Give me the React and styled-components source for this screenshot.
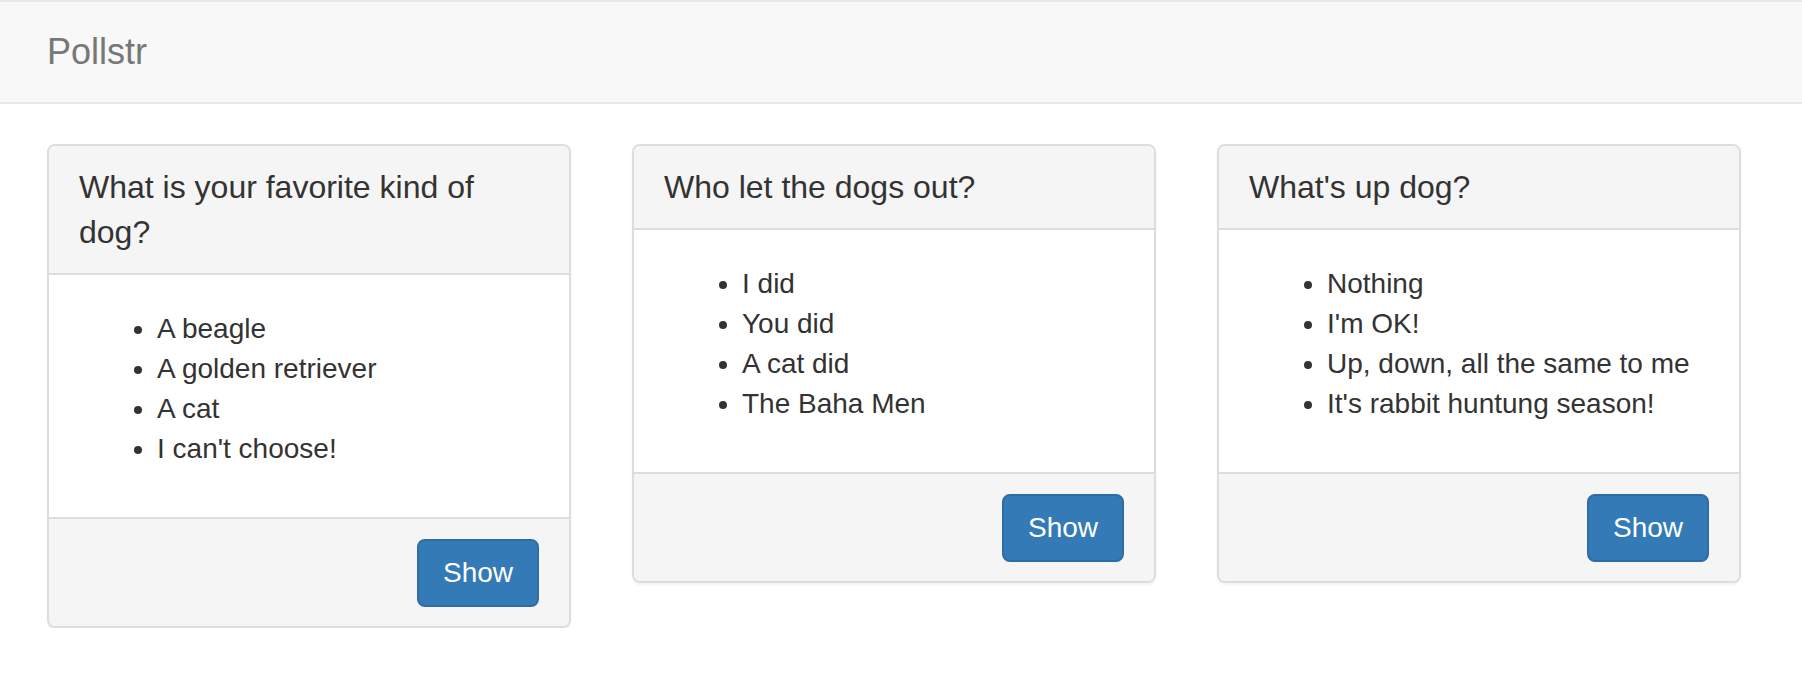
import React from "react";
import styled, { createGlobalStyle } from "styled-components";

const GlobalStyle = createGlobalStyle`
  html, body {
    margin: 0;
    padding: 0;
    background: #ffffff;
  }
  body {
    font-family: "Liberation Sans", Helvetica, Arial, sans-serif;
    color: #333333;
  }
  * { box-sizing: border-box; }
`;

const Navbar = styled.header`
  width: 100%;
  height: 104px;
  background: #f8f8f8;
  border-top: 2px solid #e7e7e7;
  border-bottom: 2px solid #e7e7e7;
  display: flex;
  align-items: center;
  padding-left: 47px;
`;

const Brand = styled.a`
  font-size: 36px;
  line-height: 40px;
  color: #777777;
  text-decoration: none;
`;

const Main = styled.main`
  display: flex;
  align-items: flex-start;
  gap: 61px;
  padding: 40px 0 0 47px;
`;

const Panel = styled.section`
  width: 524px;
  background: #ffffff;
  border: 2px solid #dddddd;
  border-radius: 8px;
  box-shadow: 0 2px 2px rgba(0, 0, 0, 0.05);
  overflow: hidden;
`;

const PanelHeading = styled.div`
  background: #f5f5f5;
  border-bottom: 2px solid #dddddd;
  padding: 19px 30px 18px;
`;

const PanelTitle = styled.h3`
  margin: 0;
  font-size: 32px;
  line-height: 45px;
  font-weight: 400;
  color: #333333;
`;

const PanelBody = styled.div`
  padding: 34px 30px 48px;
`;

const OptionList = styled.ul`
  margin: 0;
  padding-left: 78px;
  list-style: disc;
`;

const OptionItem = styled.li`
  font-size: 28px;
  line-height: 40px;
  color: #333333;
`;

const PanelFooter = styled.div`
  background: #f5f5f5;
  border-top: 2px solid #dddddd;
  padding: 20px 30px 19px;
  display: flex;
  justify-content: flex-end;
`;

const Button = styled.button`
  font-family: "Liberation Sans", Helvetica, Arial, sans-serif;
  font-size: 28px;
  line-height: 40px;
  font-weight: 400;
  color: #ffffff;
  background: #337ab7;
  border: 2px solid #2e6da4;
  border-radius: 8px;
  padding: 12px 24px;
  cursor: pointer;
`;

const polls = [
  {
    question: "What is your favorite kind of dog?",
    options: ["A beagle", "A golden retriever", "A cat", "I can't choose!"],
  },
  {
    question: "Who let the dogs out?",
    options: ["I did", "You did", "A cat did", "The Baha Men"],
  },
  {
    question: "What's up dog?",
    options: [
      "Nothing",
      "I'm OK!",
      "Up, down, all the same to me",
      "It's rabbit huntung season!",
    ],
  },
];

export default function App() {
  return (
    <>
      <GlobalStyle />
      <Navbar>
        <Brand href="#">Pollstr</Brand>
      </Navbar>
      <Main>
        {polls.map((poll) => (
          <Panel key={poll.question}>
            <PanelHeading>
              <PanelTitle>{poll.question}</PanelTitle>
            </PanelHeading>
            <PanelBody>
              <OptionList>
                {poll.options.map((o) => (
                  <OptionItem key={o}>{o}</OptionItem>
                ))}
              </OptionList>
            </PanelBody>
            <PanelFooter>
              <Button>Show</Button>
            </PanelFooter>
          </Panel>
        ))}
      </Main>
    </>
  );
}
